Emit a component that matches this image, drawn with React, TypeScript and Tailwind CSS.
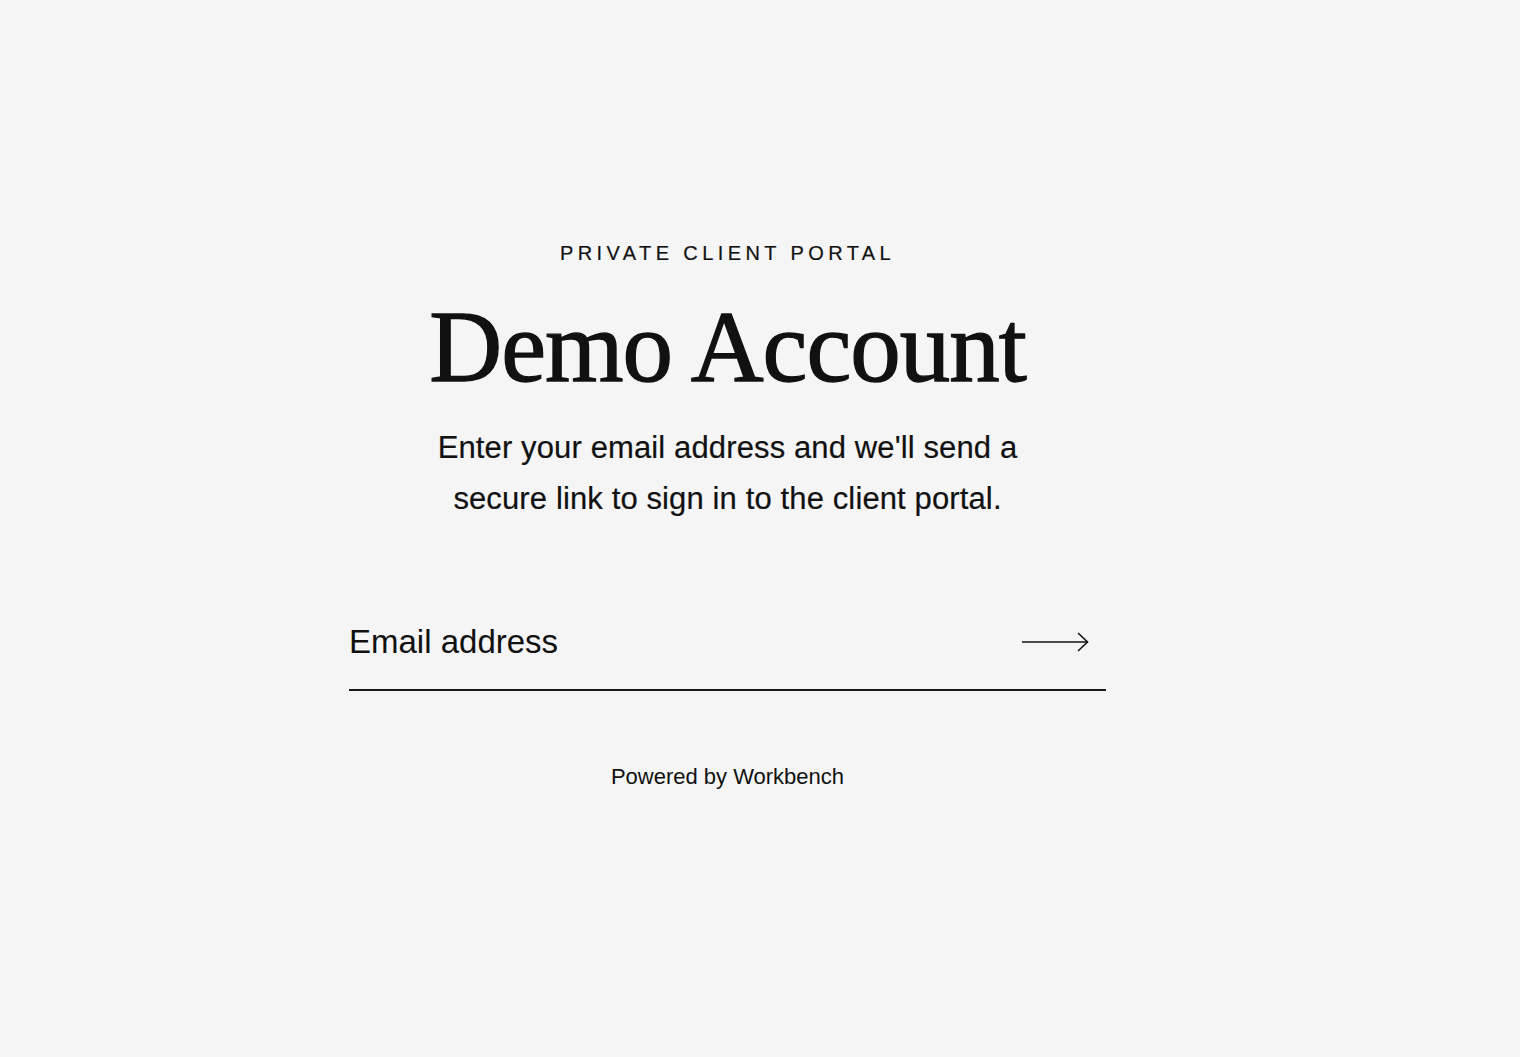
export default function App() {
  return (
    <div className="min-h-screen w-full bg-[#f5f5f5] text-[#111111] flex justify-center pr-[65px]">
      <main className="w-[757px] pt-[240px] flex flex-col items-center">
        <p className="font-['Liberation_Sans',Arial,sans-serif] text-[20px] leading-[26px] tracking-[0.22em] uppercase [-webkit-text-stroke:0.2px_#111111]">
          Private Client Portal
        </p>
        <h1 className="mt-[26px] font-['Liberation_Serif','Times_New_Roman',serif] text-[101px] leading-[110px] tracking-[-0.01em] [-webkit-text-stroke:1.3px_#111111]">
          Demo Account
        </h1>
        <p className="mt-[20px] w-[620px] text-center font-['Liberation_Sans',Arial,sans-serif] text-[31px] leading-[51px] tracking-[0.004em] [-webkit-text-stroke:0.2px_#111111]">
          Enter your email address and we'll send a secure link to sign in to the client portal.
        </p>
        <form className="mt-[98px] w-full" onSubmit={(e) => e.preventDefault()}>
          <label className="flex items-center w-full border-b-2 border-[#1a1a1a] pb-[27px]">
            <input
              type="email"
              placeholder="Email address"
              className="flex-1 h-[40px] bg-transparent outline-none font-['Liberation_Sans',Arial,sans-serif] text-[33px] leading-[40px] text-[#111111] placeholder:text-[#111111]"
            />
            <button type="submit" className="mr-[17px] text-[#111111]" aria-label="Continue">
              <svg width="67" height="22" viewBox="0 0 67 22" fill="none" stroke="currentColor" strokeWidth="1.6">
                <path d="M0 11 H65" />
                <path d="M56 2 L65.5 11 L56 20" />
              </svg>
            </button>
          </label>
        </form>
        <p className="mt-[73px] font-['Liberation_Sans',Arial,sans-serif] text-[22px] leading-[25px]">Powered by Workbench</p>
      </main>
    </div>
  );
}
